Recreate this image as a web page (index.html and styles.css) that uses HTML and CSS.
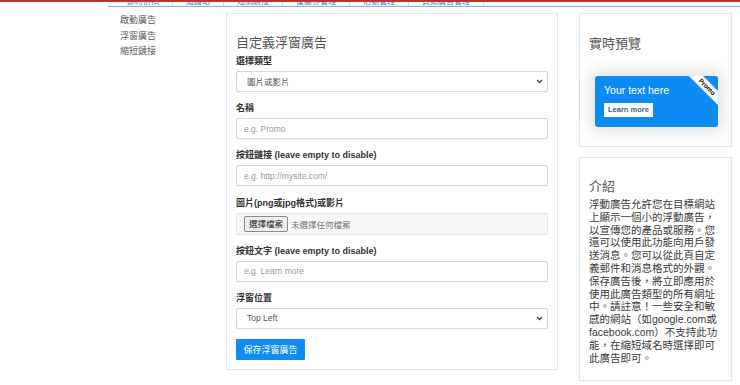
FILE: index.html
```html
<!DOCTYPE html>
<html lang="zh-Hant">
<head>
<meta charset="utf-8">
<title>自定義浮窗廣告</title>
<link rel="stylesheet" href="styles.css">
</head>
<body>
<div class="topline"></div>
<nav class="nav">
  <a class="nav-item" href="#">即時折扣</a>
  <a class="nav-item" href="#">追蹤站</a>
  <a class="nav-item" href="#">短網鏈接</a>
  <a class="nav-item" href="#">優惠券管理</a>
  <a class="nav-item" href="#">活動管理</a>
  <a class="nav-item" href="#">頁頭廣告管理</a>
</nav>
<div class="page">
  <aside class="sidebar">
    <a class="side-link" href="#">啟動廣告</a>
    <a class="side-link" href="#">浮窗廣告</a>
    <a class="side-link" href="#">縮短鏈接</a>
  </aside>
  <main class="card main-card">
    <h2 class="card-title">自定義浮窗廣告</h2>
    <div class="group">
      <label class="label">選擇類型</label>
      <div class="select-wrap">
        <select class="control select"><option>圖片或影片</option></select>
        <svg class="chev" width="7" height="5" viewBox="0 0 7 5"><path d="M1 1 L3.5 3.5 L6 1" fill="none" stroke="#444" stroke-width="1.3"/></svg>
      </div>
    </div>
    <div class="group">
      <label class="label">名稱</label>
      <input class="control" type="text" placeholder="e.g. Promo">
    </div>
    <div class="group">
      <label class="label">按鈕鏈接 (leave empty to disable)</label>
      <input class="control" type="text" placeholder="e.g. http://mysite.com/">
    </div>
    <div class="group">
      <label class="label">圖片(png或jpg格式)或影片</label>
      <div class="control file-box">
        <span class="file-btn">選擇檔案</span>
        <span class="file-none">未選擇任何檔案</span>
      </div>
    </div>
    <div class="group">
      <label class="label">按鈕文字 (leave empty to disable)</label>
      <input class="control" type="text" placeholder="e.g. Learn more">
    </div>
    <div class="group last">
      <label class="label">浮窗位置</label>
      <div class="select-wrap">
        <select class="control select"><option>Top Left</option></select>
        <svg class="chev" width="7" height="5" viewBox="0 0 7 5"><path d="M1 1 L3.5 3.5 L6 1" fill="none" stroke="#444" stroke-width="1.3"/></svg>
      </div>
    </div>
    <button class="save-btn" type="button">保存浮窗廣告</button>
  </main>
  <div class="side-col">
    <section class="card preview-card">
      <h2 class="card-title">實時預覽</h2>
      <div class="promo-box">
        <div class="promo-text">Your text here</div>
        <span class="promo-btn">Learn more</span>
        <div class="ribbon">Promo</div>
      </div>
    </section>
    <section class="card intro-card">
      <h2 class="card-title">介紹</h2>
      <p class="intro-text">浮動廣告允許您在目標網站上顯示一個小的浮動廣告，以宣傳您的產品或服務。您還可以使用此功能向用戶發送消息。您可以從此頁自定義郵件和消息格式的外觀。保存廣告後，將立即應用於使用此廣告類型的所有網址中。請註意！一些安全和敏感的網站（如google.com或facebook.com）不支持此功能，在縮短域名時選擇即可此廣告即可。</p>
    </section>
  </div>
</div>
</body>
</html>
```
FILE: styles.css
```css
* { box-sizing: border-box; }
html, body { margin: 0; padding: 0; background: #fff; }
body {
  font-family: "Liberation Sans", "Noto Sans CJK TC", sans-serif;
  color: #333;
  overflow: hidden;
  height: 385px;
}
.topline { height: 2px; background: #b8352c; }
.nav {
  display: flex;
  height: 5px;
  overflow: hidden;
  margin-left: 108px;
  padding-left: 6px;
  border-bottom: 1px solid #8cacdf;
}
.nav-item {
  font-size: 8px;
  line-height: 8px;
  margin-top: -4px;
  color: #3d78d4;
  text-decoration: none;
  padding: 0 13px;
  border-right: 1px solid #dcdcdc;
  white-space: nowrap;
}
.page {
  display: flex;
  align-items: flex-start;
  padding-left: 120px;
  margin-top: 6px;
}
.sidebar {
  width: 106px;
  display: flex;
  flex-direction: column;
  margin-top: 0;
}
.side-link {
  font-size: 9px;
  line-height: 15.5px;
  color: #5a5a5a;
  text-decoration: none;
}
.card {
  background: #fff;
  border: 1px solid #e4e4e4;
  box-shadow: 0 0 2px rgba(0,0,0,0.04);
}
.card-title {
  margin: 0;
  font-size: 13px;
  line-height: 16px;
  font-weight: normal;
  color: #555;
}
.main-card {
  width: 332px;
  height: 357px;
  padding: 21px 9px 9px 9px;
}
.main-card .card-title { margin-bottom: 4px; }
.group { display: flex; flex-direction: column; margin-bottom: 10.2px; }
.group.last { margin-bottom: 10px; }
.label {
  font-size: 9px;
  line-height: 12px;
  font-weight: bold;
  color: #333;
  margin-bottom: 4px;
}
.control {
  width: 100%;
  height: 21px;
  border: 1px solid #d8d8d8;
  border-radius: 2px;
  background: #fff;
  font-family: "Liberation Sans", "Noto Sans CJK TC", sans-serif;
  font-size: 8.5px;
  color: #555;
  padding: 0 7px;
  box-shadow: 0 1px 2px rgba(0,0,0,0.06);
  outline: none;
}
.control::placeholder { color: #9a9a9a; }
.select-wrap { position: relative; }
.select {
  appearance: none;
  -webkit-appearance: none;
  padding-left: 10px;
  display: block;
}
.chev { position: absolute; right: 5px; top: 8px; }
.file-box {
  display: flex;
  align-items: center;
  gap: 3px;
  height: 22px;
  background: #f7f7f7;
  border-color: #e6e6e6;
  box-shadow: none;
  padding: 0 7px;
}
.file-btn {
  font-size: 8.5px;
  line-height: 14px;
  padding: 0 4px;
  background: #efefef;
  border: 1px solid #8a8a8a;
  border-radius: 2px;
  color: #222;
}
.file-none { font-size: 8.5px; color: #777; }
.save-btn {
  display: block;
  height: 21px;
  width: 69px;
  border: none;
  border-radius: 1px;
  background: #0f8cf2;
  color: #fff;
  font-family: "Liberation Sans", "Noto Sans CJK TC", sans-serif;
  font-size: 9px;
  padding: 0;
}
.side-col {
  margin-left: 21px;
  width: 153px;
  display: flex;
  flex-direction: column;
  gap: 10px;
}
.preview-card {
  height: 134px;
  padding: 22px 9px 20px 9px;
}
.promo-box {
  position: relative;
  overflow: hidden;
  margin: 24px 4px 0 6px;
  height: 51px;
  background: #0c8cf3;
  border-radius: 3px;
  box-shadow: 0 0 16px 4px rgba(0,0,0,0.13);
  padding: 8px 9px;
}
.promo-text {
  font-size: 10.5px;
  line-height: 13px;
  color: #fff;
}
.promo-btn {
  display: inline-block;
  margin-top: 6px;
  height: 14px;
  line-height: 14px;
  padding: 0 4px;
  background: #fff;
  color: #3a5f86;
  font-size: 7.5px;
  font-weight: bold;
}
.ribbon {
  position: absolute;
  width: 60px;
  top: 6px;
  right: -19px;
  transform: rotate(45deg);
  background: #fff;
  color: #111;
  text-align: center;
  font-size: 6.5px;
  line-height: 10px;
  font-weight: bold;
}
.intro-card {
  height: 224px;
  padding: 21px 9px 10px 9px;
}
.intro-card .card-title { margin-bottom: 3px; }
.intro-text {
  margin: 0;
  width: 131px;
  font-size: 10.5px;
  line-height: 12.8px;
  color: #3a3a3a;
}
```
